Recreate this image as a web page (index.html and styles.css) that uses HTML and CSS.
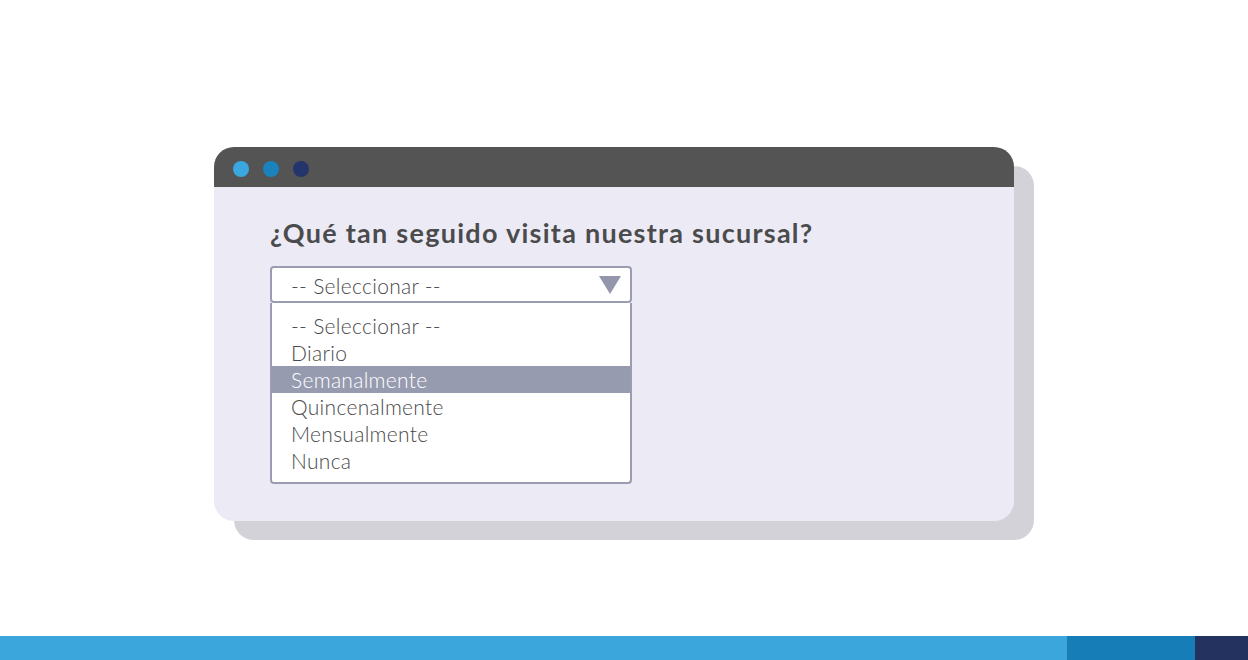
FILE: index.html
```html
<!DOCTYPE html>
<html lang="es">
<head>
    <meta charset="UTF-8">
    <title>Encuesta</title>
    <link rel="stylesheet" href="styles.css">
</head>
<body>
<div class="stage">
    <div class="window">
        <div class="titlebar">
            <span class="dot dot-1"></span>
            <span class="dot dot-2"></span>
            <span class="dot dot-3"></span>
        </div>
        <div class="content">
            <h2>¿Qué tan seguido visita nuestra sucursal?</h2>
            <div class="select">
                <div class="select-value">
                    <span>-- Seleccionar --</span>
                    <svg class="arrow" width="22" height="18" viewBox="0 0 22 18"><polygon points="0,0 22,0 11,18" fill="#9497ab"/></svg>
                </div>
                <ul class="options">
                    <li>-- Seleccionar --</li>
                    <li>Diario</li>
                    <li class="active">Semanalmente</li>
                    <li>Quincenalmente</li>
                    <li>Mensualmente</li>
                    <li>Nunca</li>
                </ul>
            </div>
        </div>
    </div>
</div>
<div class="footer-bar">
    <div class="seg seg-1"></div>
    <div class="seg seg-2"></div>
    <div class="seg seg-3"></div>
</div>
</body>
</html>
```

FILE: styles.css
```css
html, body { margin: 0; padding: 0; }
body { background: #fff; font-family: Lato, "Open Sans", sans-serif; width: 1248px; height: 660px; overflow: hidden; }
.stage { height: 636px; padding-top: 147px; box-sizing: border-box; }
.window {
    width: 800px; margin-left: 214px; height: 374px;
    background: #ecebf5; border-radius: 20px;
    box-shadow: 20px 19px 0 #d3d2d9;
    overflow: hidden;
}
.titlebar {
    height: 40px; background: #545454;
    display: flex; align-items: flex-start; gap: 14px;
    padding: 14px 0 0 19px; box-sizing: border-box;
}
.dot { width: 16px; height: 16px; border-radius: 50%; display: block; }
.dot-1 { background: #3aa7de; }
.dot-2 { background: #1a82bd; }
.dot-3 { background: #23356b; }
.content { padding: 27px 0 0 56px; }
h2 {
    margin: 0 0 15px; font-size: 27px; font-weight: 700;
    color: #4b4b4d; line-height: 37px; letter-spacing: 1.27px;
}
.select { width: 362px; font-weight: 300; font-size: 21px; letter-spacing: 0.3px; color: #4a4a4a; }
.select-value {
    height: 37px; box-sizing: border-box;
    background: #fff; border: 2px solid #9a9cb1; border-radius: 4px;
    display: flex; align-items: center; justify-content: space-between;
    padding: 0 9px 0 19px;
}
.select-value span { margin-top: 2px; }
.options {
    list-style: none; margin: 0; padding: 9px 0 8px;
    background: #fff; border: 2px solid #9a9cb1; border-top: none;
    border-radius: 0 0 4px 4px;
}
.options li { height: 27px; line-height: 27px; padding-left: 19px; }
.options li.active { background: #979bb0; color: #fff; }
.footer-bar { display: flex; height: 24px; }
.seg-1 { width: 1067px; background: #3aa6dc; }
.seg-2 { width: 128px; background: #167db6; }
.seg-3 { flex: 1; background: #23325f; }
```
